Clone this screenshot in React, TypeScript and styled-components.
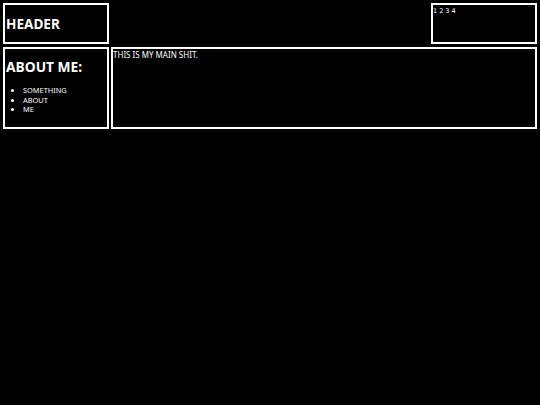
import React from "react";
import styled, { createGlobalStyle } from "styled-components";

const Global = createGlobalStyle`
  html, body { margin: 0; padding: 0; background: #000; }
  body { font-family: "Comic Sans MS", "Noto Sans", sans-serif; color: #fff; }
  * { box-sizing: border-box; }
`;

const Page = styled.div`
  padding: 3px 3px 0 3px;
  display: flex;
  flex-direction: column;
  gap: 3px;
  width: 540px;
  height: 405px;
  background: #000;
`;

const TopRow = styled.div`
  display: flex;
  justify-content: space-between;
  height: 41px;
`;

const Box = styled.div<{ $w?: number }>`
  border: 2px solid #fff;
  background: #000;
  ${(p) => (p.$w ? `width: ${p.$w}px; flex: none;` : `flex: 1;`)}
`;

const HeaderBox = styled(Box)`
  display: flex;
  align-items: center;
  padding-left: 1px;
`;

const Title = styled.h1`
  margin: 0;
  font-size: 13.6px;
  font-weight: 700;
`;

const NavBox = styled(Box)`
  padding: 2px 0 0 0;
`;

const Nav = styled.div`
  font-family: "DejaVu Sans", sans-serif;
  font-size: 6.5px;
  display: flex;
  gap: 2px;
`;

const BottomRow = styled.div`
  display: flex;
  gap: 2px;
  height: 82px;
`;

const Sidebar = styled(Box)`
  padding: 8px 0 0 1px;
`;

const SideTitle = styled.h2`
  margin: 0;
  font-size: 13.8px;
  font-weight: 700;
`;

const List = styled.ul`
  margin: 10px 0 0 0;
  padding-left: 17px;
  font-size: 7.4px;
  line-height: 9.5px;
`;

const MainBox = styled(Box)`
  padding: 0;
  font-size: 8px;
`;

export default function App() {
  return (
    <>
      <Global />
      <Page>
        <TopRow>
          <HeaderBox $w={106}>
            <Title>HEADER</Title>
          </HeaderBox>
          <NavBox $w={106}>
            <Nav>
              <span>1</span>
              <span>2</span>
              <span>3</span>
              <span>4</span>
            </Nav>
          </NavBox>
        </TopRow>
        <BottomRow>
          <Sidebar $w={106}>
            <SideTitle>ABOUT ME:</SideTitle>
            <List>
              <li>SOMETHING</li>
              <li>ABOUT</li>
              <li>ME</li>
            </List>
          </Sidebar>
          <MainBox>THIS IS MY MAIN SHIT.</MainBox>
        </BottomRow>
      </Page>
    </>
  );
}
